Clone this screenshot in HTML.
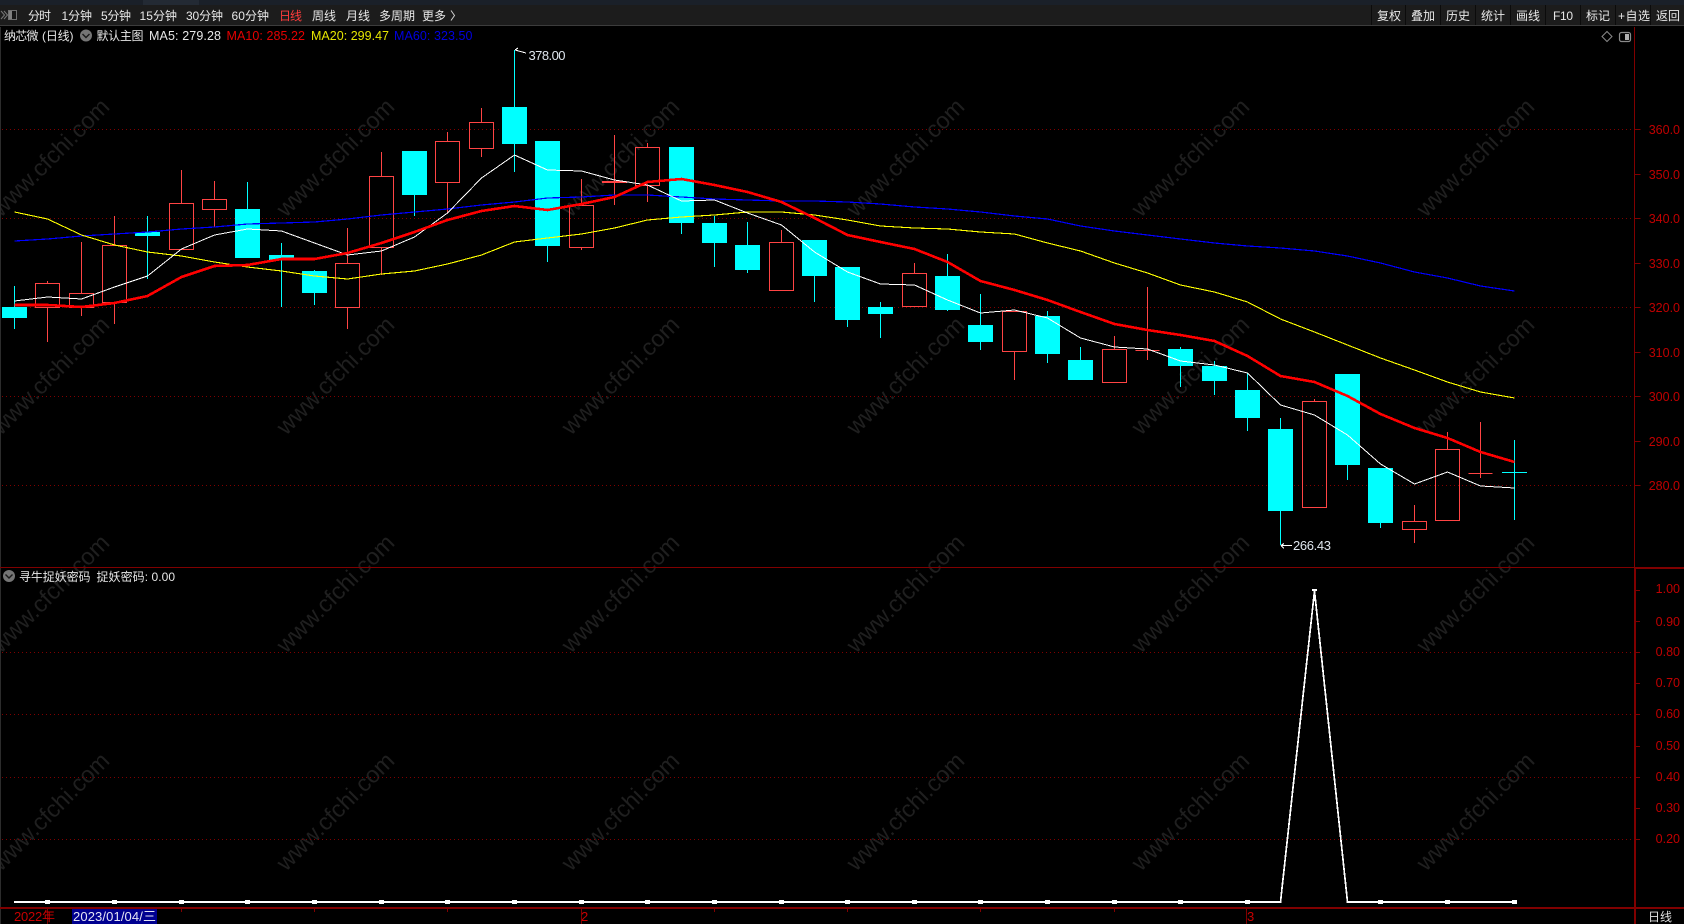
<!DOCTYPE html>
<html lang="zh">
<head>
<meta charset="utf-8">
<title>纳芯微 日线</title>
<style>
html,body{margin:0;padding:0;background:#000;width:1684px;height:924px;overflow:hidden}
svg{position:absolute;left:0;top:0;display:block}
text{font-family:"Liberation Sans","Noto Sans CJK SC",sans-serif;font-size:12.5px;fill:#e6e6e6}
.tb text{font-size:12px;fill:#e8e8e8}
.ax text{fill:#c00000;font-size:12.5px;text-anchor:end}
.wm text{font-size:23.5px;fill:#1f1f1f}
.cr{shape-rendering:crispEdges}
</style>
</head>
<body>
<svg width="1684" height="924" viewBox="0 0 1684 924" xmlns="http://www.w3.org/2000/svg">
<rect width="1684" height="924" fill="#000"/>
<!-- watermark -->
<g class="wm">
<text transform="translate(1 218) rotate(-45)">www.cfchi.com</text>
<text transform="translate(286 218) rotate(-45)">www.cfchi.com</text>
<text transform="translate(571 218) rotate(-45)">www.cfchi.com</text>
<text transform="translate(856 218) rotate(-45)">www.cfchi.com</text>
<text transform="translate(1141 218) rotate(-45)">www.cfchi.com</text>
<text transform="translate(1426 218) rotate(-45)">www.cfchi.com</text>
<text transform="translate(1 436) rotate(-45)">www.cfchi.com</text>
<text transform="translate(286 436) rotate(-45)">www.cfchi.com</text>
<text transform="translate(571 436) rotate(-45)">www.cfchi.com</text>
<text transform="translate(856 436) rotate(-45)">www.cfchi.com</text>
<text transform="translate(1141 436) rotate(-45)">www.cfchi.com</text>
<text transform="translate(1426 436) rotate(-45)">www.cfchi.com</text>
<text transform="translate(1 654) rotate(-45)">www.cfchi.com</text>
<text transform="translate(286 654) rotate(-45)">www.cfchi.com</text>
<text transform="translate(571 654) rotate(-45)">www.cfchi.com</text>
<text transform="translate(856 654) rotate(-45)">www.cfchi.com</text>
<text transform="translate(1141 654) rotate(-45)">www.cfchi.com</text>
<text transform="translate(1426 654) rotate(-45)">www.cfchi.com</text>
<text transform="translate(1 872) rotate(-45)">www.cfchi.com</text>
<text transform="translate(286 872) rotate(-45)">www.cfchi.com</text>
<text transform="translate(571 872) rotate(-45)">www.cfchi.com</text>
<text transform="translate(856 872) rotate(-45)">www.cfchi.com</text>
<text transform="translate(1141 872) rotate(-45)">www.cfchi.com</text>
<text transform="translate(1426 872) rotate(-45)">www.cfchi.com</text>
</g>
<!-- grid -->
<path class="cr" fill="none" stroke="#800000" stroke-width="1" stroke-dasharray="1 3" d="M2 129.5H1634M2 218.5H1634M2 307.5H1634M2 396.5H1634M2 485.5H1634M2 652.5H1634M2 714.5H1634M2 777.5H1634M2 839.5H1634"/>
<!-- candles cyan -->
<path class="cr" fill="none" stroke="#00ffff" stroke-width="1" d="M14.5 286V329M147.5 216V279M247.5 182V258M281.5 243V307M314.5 270V305M414.5 151V216M514.5 50V172M547.5 141V262M681.5 177V234M714.5 216V267M747.5 222V273M814.5 240V302M847.5 267V327M880.5 302V338M947.5 254V311M980.5 294V350M1047.5 311V363M1080.5 347V380M1180.5 347V387M1214.5 361V395M1247.5 373V431M1280.5 418V545M1347.5 374V480M1380.5 468V528M1514.5 440V520"/>
<path class="cr" fill="#00ffff" d="M2 307h25v11h-25zM135 232h25v4h-25zM235 209h25v49h-25zM269 255h25v5h-25zM302 271h25v22h-25zM402 151h25v44h-25zM502 107h25v37h-25zM535 141h25v105h-25zM669 147h25v76h-25zM702 223h25v20h-25zM735 245h25v25h-25zM802 240h25v36h-25zM835 267h25v53h-25zM868 307h25v7h-25zM935 276h25v34h-25zM968 325h25v17h-25zM1035 316h25v38h-25zM1068 360h25v20h-25zM1168 349h25v17h-25zM1202 366h25v15h-25zM1235 390h25v28h-25zM1268 429h25v82h-25zM1335 374h25v91h-25zM1368 468h25v55h-25zM1502 472h25v1h-25z"/>
<!-- candles red -->
<path class="cr" fill="none" stroke="#ff4444" stroke-width="1" d="M47.5 281V283M47.5 307V342M81.5 242V293M81.5 307V316M114.5 216V245M114.5 302V324M181.5 170V203M214.5 181V199M214.5 209V227M347.5 228V263M347.5 307V329M381.5 152V176M381.5 247V275M447.5 132V141M447.5 182V213M481.5 108V122M481.5 148V157M581.5 179V205M581.5 247V250M614.5 135V181M614.5 183V205M647.5 143V147M647.5 185V202M781.5 230V242M914.5 263V273M1114.5 336V349M1147.5 287V360M1314.5 399V401M1414.5 505V521M1414.5 529V543M1447.5 432V449M1480.5 422V478M1014.5 351V380M35.5 283.5h24v24h-24zM69.5 293.5h24v14h-24zM102.5 245.5h24v57h-24zM169.5 203.5h24v46h-24zM202.5 199.5h24v10h-24zM335.5 263.5h24v44h-24zM369.5 176.5h24v71h-24zM435.5 141.5h24v41h-24zM469.5 122.5h24v26h-24zM569.5 205.5h24v42h-24zM635.5 147.5h24v38h-24zM769.5 242.5h24v48h-24zM902.5 273.5h24v33h-24zM1002.5 311.5h24v40h-24zM1102.5 349.5h24v33h-24zM1302.5 401.5h24v106h-24zM1402.5 521.5h24v8h-24zM1435.5 449.5h24v71h-24zM1135.5 350.5h24M1468.5 473.5h24"/>
<path class="cr" fill="#ff4444" d="M602 181h25v2h-25z"/>
<!-- MA lines -->
<g class="cr" fill="none" stroke-linejoin="round">
<polyline stroke="#0000ff" stroke-width="1.2" points="14.5,241 47.5,239 81.5,236 114.5,234 147.5,232 181.5,229 214.5,227 247.5,224 281.5,223 314.5,222 347.5,219 381.5,215 414.5,212 447.5,209 481.5,205 514.5,202 547.5,198 581.5,197 614.5,195 647.5,195 681.5,197 714.5,199 747.5,200 781.5,201 814.5,201 847.5,202 880.5,204 914.5,207 947.5,209 980.5,212 1014.5,216 1047.5,219 1080.5,226 1114.5,231 1147.5,235 1180.5,239 1214.5,243 1247.5,246 1280.5,248 1314.5,251 1347.5,256 1380.5,263 1414.5,272 1447.5,278 1480.5,286 1514.5,291"/>
<polyline stroke="#ffff00" stroke-width="1.1" points="14.5,212 47.5,219 81.5,235 114.5,245 147.5,252 181.5,256 214.5,262 247.5,267 281.5,271 314.5,276 347.5,279 381.5,274 414.5,271 447.5,264 481.5,255 514.5,242 547.5,238 581.5,234 614.5,228 647.5,220 681.5,217 714.5,215 747.5,212 781.5,212 814.5,215 847.5,220 880.5,226 914.5,228 947.5,229 980.5,232 1014.5,234 1047.5,243 1080.5,251 1114.5,263 1147.5,273 1180.5,285 1214.5,292 1247.5,302 1280.5,319 1314.5,332 1347.5,345 1380.5,358 1414.5,370 1447.5,382 1480.5,392 1514.5,398"/>
<polyline stroke="#ffffff" stroke-width="1" points="14.5,301 47.5,297 81.5,299 114.5,287 147.5,276 181.5,249 214.5,235 247.5,229 281.5,231 314.5,243 347.5,255 381.5,251 414.5,237 447.5,213 481.5,178 514.5,155 547.5,170 581.5,171 614.5,180 647.5,185 681.5,201 714.5,200 747.5,213 781.5,225 814.5,252 847.5,272 880.5,284 914.5,285 947.5,300 980.5,313 1014.5,310 1047.5,318 1080.5,338 1114.5,347 1147.5,349 1180.5,361 1214.5,365 1247.5,373 1280.5,405 1314.5,415 1347.5,435 1380.5,464 1414.5,484 1447.5,472 1480.5,486 1514.5,488"/>
<polyline stroke="#ff0000" stroke-width="2.6" points="14.5,305 47.5,305 81.5,307 114.5,303 147.5,296 181.5,277 214.5,266 247.5,265 281.5,259 314.5,259 347.5,253 381.5,243 414.5,232 447.5,220 481.5,211 514.5,206 547.5,210 581.5,204 614.5,197 647.5,182 681.5,179 714.5,185 747.5,192 781.5,202 814.5,218 847.5,235 880.5,242 914.5,249 947.5,262 980.5,281 1014.5,290 1047.5,300 1080.5,312 1114.5,324 1147.5,330 1180.5,335 1214.5,341 1247.5,356 1280.5,376 1314.5,382 1347.5,396 1380.5,414 1414.5,428 1447.5,438 1480.5,452 1514.5,462"/>
</g>
<!-- extreme labels -->
<path class="cr" fill="none" stroke="#fff" stroke-width="1" d="M515 50L526 53M515 50l3-2M1281 545.5H1292M1281 545.5l3-2M1281 545.5l3 3"/>
<text x="528.5" y="60" textLength="37" style="font-size:13px;fill:#dfe6ee">378.00</text>
<text x="1293" y="550" textLength="38" style="font-size:13px;fill:#dfe6ee">266.43</text>
<!-- lower panel -->
<polyline class="cr" fill="none" stroke="#fff" stroke-width="1.7" points="14,902 1280.5,902 1314.5,591 1347.5,902 1514,902"/>
<path class="cr" fill="#fff" transform="translate(-1 0)" d="M46 900h5v4h-5zM113 900h5v4h-5zM180 900h5v4h-5zM246 900h5v4h-5zM313 900h5v4h-5zM380 900h5v4h-5zM446 900h5v4h-5zM513 900h5v4h-5zM580 900h5v4h-5zM646 900h5v4h-5zM713 900h5v4h-5zM780 900h5v4h-5zM846 900h5v4h-5zM913 900h5v4h-5zM979 900h5v4h-5zM1046 900h5v4h-5zM1113 900h5v4h-5zM1179 900h5v4h-5zM1246 900h5v4h-5zM1379 900h5v4h-5zM1446 900h5v4h-5zM1513 900h5v4h-5z"/>
<path class="cr" fill="#fff" d="M1312 589h5v2h-5z"/>
<!-- frame -->
<path class="cr" fill="none" stroke="#2c2c2c" stroke-width="1" d="M0.5 27V924"/>
<path class="cr" fill="none" stroke="#800000" stroke-width="1" d="M1634.5 27V568M0 567.5H1635M1634.5 129.5h6M1634.5 174.5h6M1634.5 218.5h6M1634.5 263.5h6M1634.5 307.5h6M1634.5 352.5h6M1634.5 396.5h6M1634.5 441.5h6M1634.5 485.5h6M1635 590.5h5M1635 621.5h5M1635 652.5h5M1635 683.5h5M1635 714.5h5M1635 746.5h5M1635 777.5h5M1635 808.5h5M1635 839.5h5M47.5 908V924M581.5 908V924M1246.5 908V924M181.5 908V912M314.5 908V912M447.5 908V912M714.5 908V912M847.5 908V912M980.5 908V912M1114.5 908V912"/>
<path class="cr" fill="#800000" d="M1634 567h50v2h-50zM1634 568h2v356h-2zM0 907h1684v2H0z"/>
<!-- axis labels -->
<g class="ax">
<text x="1680" y="134">360.0</text>
<text x="1680" y="179">350.0</text>
<text x="1680" y="223">340.0</text>
<text x="1680" y="268">330.0</text>
<text x="1680" y="312">320.0</text>
<text x="1680" y="357">310.0</text>
<text x="1680" y="401">300.0</text>
<text x="1680" y="446">290.0</text>
<text x="1680" y="490">280.0</text>
<text x="1680" y="593">1.00</text>
<text x="1680" y="626">0.90</text>
<text x="1680" y="656">0.80</text>
<text x="1680" y="687">0.70</text>
<text x="1680" y="718">0.60</text>
<text x="1680" y="750">0.50</text>
<text x="1680" y="781">0.40</text>
<text x="1680" y="812">0.30</text>
<text x="1680" y="843">0.20</text>
</g>
<!-- bottom axis -->
<text x="14" y="921" textLength="41" style="fill:#c80000;font-size:13px">2022年</text>
<rect class="cr" x="72" y="909" width="85" height="15" fill="#000090"/>
<text x="73" y="921" textLength="83" style="fill:#e4e4f4;font-size:13px">2023/01/04/三</text>
<text x="581" y="921" style="fill:#c80000;font-size:13px">2</text>
<text x="1247" y="921" style="fill:#c80000;font-size:13px">3</text>
<text x="1648" y="921" textLength="24" style="font-size:12px;fill:#e0e0e0">日线</text>
<!-- toolbar -->
<rect class="cr" x="0" y="0" width="1684" height="5" fill="#1a2029"/>
<rect class="cr" x="143" y="0" width="56" height="5" fill="#232a34"/>
<rect class="cr" x="0" y="5" width="1684" height="20" fill="#1c1c1c"/>
<rect class="cr" x="0" y="25" width="1684" height="1" fill="#3c3c3c"/>
<path fill="none" stroke="#777" stroke-width="1" d="M1 11l3.5 4-3.5 4M4 11l3.5 4-3.5 4"/>
<rect class="cr" x="8.5" y="10.5" width="8" height="9" fill="#161616" stroke="#707070"/>
<rect class="cr" x="9" y="11" width="3" height="8" fill="#808080"/>
<g class="tb">
<text x="28" y="20" textLength="23">分时</text>
<text x="61.5" y="20" textLength="30.5">1分钟</text>
<text x="101" y="20" textLength="30">5分钟</text>
<text x="139.5" y="20" textLength="37.5">15分钟</text>
<text x="186" y="20" textLength="37">30分钟</text>
<text x="231.5" y="20" textLength="37.5">60分钟</text>
<text x="279" y="20" textLength="23" style="fill:#ff3c3c">日线</text>
<text x="312" y="20" textLength="24">周线</text>
<text x="346" y="20" textLength="24">月线</text>
<text x="379" y="20" textLength="36">多周期</text>
<text x="422" y="20" textLength="24">更多</text>
</g>
<path fill="none" stroke="#d0d0d0" stroke-width="1" d="M451 10.5l3.5 5-3.5 5"/>
<path class="cr" fill="none" stroke="#0b0b0b" stroke-width="1" d="M1371.5 5V25M1405.5 5V25M1440.5 5V25M1475.5 5V25M1510.5 5V25M1545.5 5V25M1580.5 5V25M1615.5 5V25M1650.5 5V25"/>
<g class="tb">
<text x="1377" y="20" textLength="24">复权</text>
<text x="1411" y="20" textLength="24">叠加</text>
<text x="1446" y="20" textLength="24">历史</text>
<text x="1481" y="20" textLength="24">统计</text>
<text x="1516" y="20" textLength="24">画线</text>
<text x="1553" y="20" textLength="20">F10</text>
<text x="1586" y="20" textLength="24">标记</text>
<text x="1618" y="20" textLength="32">+自选</text>
<text x="1656" y="20" textLength="24">返回</text>
</g>
<!-- legend -->
<text x="4" y="40" textLength="34.5" style="font-size:12px">纳芯微</text>
<text x="42" y="40" textLength="31.5" style="font-size:12px">(日线)</text>
<circle cx="86" cy="35.5" r="6" fill="#757575"/>
<path fill="none" stroke="#1a1a1a" stroke-width="1.4" d="M82.5 34l3.5 3.5 3.5-3.5"/>
<text x="96.5" y="40" textLength="47" style="font-size:12px">默认主图</text>
<text x="149" y="40" textLength="72" style="fill:#e6e6e6">MA5: 279.28</text>
<text x="226.5" y="40" textLength="78.5" style="fill:#e60000">MA10: 285.22</text>
<text x="311" y="40" textLength="78" style="fill:#e6e600">MA20: 299.47</text>
<text x="394" y="40" textLength="78.5" style="fill:#0000e0">MA60: 323.50</text>
<path fill="none" stroke="#8a8a8a" stroke-width="1" d="M1607 31.5l5 5-5 5-5-5z"/>
<rect x="1619.5" y="32.5" width="11" height="9" rx="2" fill="none" stroke="#8a8a8a" stroke-width="1.2"/>
<rect class="cr" x="1625" y="34" width="4" height="6" fill="#b0b0b0"/>
<circle cx="9" cy="576" r="6" fill="#757575"/>
<path fill="none" stroke="#1a1a1a" stroke-width="1.4" d="M5.5 574.5l3.5 3.5 3.5-3.5"/>
<text x="19" y="581" textLength="71.5" style="font-size:12px">寻牛捉妖密码</text>
<text x="96.5" y="581" textLength="78.5" style="font-size:12px">捉妖密码: 0.00</text>
</svg>
</body>
</html>
